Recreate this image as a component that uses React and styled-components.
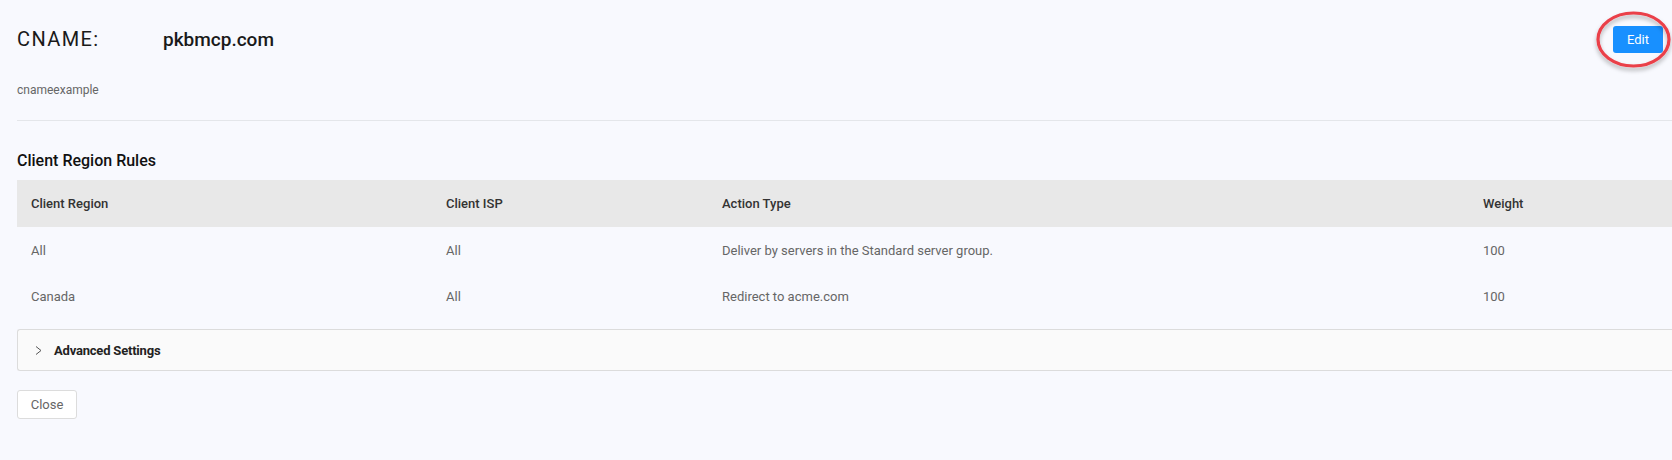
import React from "react";
import styled, { createGlobalStyle } from "styled-components";

const Global = createGlobalStyle`
  html, body { margin: 0; padding: 0; background: #f8f9fe; overflow: hidden; }
  body { font-family: Roboto, "Liberation Sans", Arial, sans-serif; }
  * { box-sizing: border-box; }
`;

const Page = styled.div`
  width: 1672px;
  height: 460px;
  background: #f8f9fe;
  padding: 26px 0 0 17px;
`;

const HeaderRow = styled.div`
  display: flex;
  align-items: center;
  height: 27px;
`;

const Label = styled.div`
  font-size: 20px;
  line-height: 27px;
  color: #1a1a1a;
  letter-spacing: 1.4px;
  width: 146px;
`;

const Domain = styled.div`
  font-size: 19px;
  line-height: 27px;
  color: #1a1a1a;
  font-weight: 500;
  flex: 1;
`;

const EditWrap = styled.div`
  position: relative;
  margin-right: 9px;
`;

const PrimaryButton = styled.button`
  width: 50px;
  height: 27px;
  border: none;
  border-radius: 3px;
  background: #1890ff;
  color: #fff;
  font-family: inherit;
  font-size: 13px;
  padding: 0;
`;

const Ring = styled.svg`
  position: absolute;
  left: -19px;
  top: -16px;
  pointer-events: none;
  overflow: visible;
`;

const Description = styled.div`
  margin-top: 28px;
  font-size: 12px;
  line-height: 18px;
  color: #666;
`;

const Divider = styled.div`
  margin-top: 21px;
  height: 1px;
  background: #e4e6ea;
`;

const SectionTitle = styled.h3`
  margin: 29px 0 8px;
  font-size: 16px;
  line-height: 22px;
  font-weight: 500;
  color: #111;
`;

const Table = styled.table`
  width: 100%;
  border-collapse: collapse;
  table-layout: fixed;
`;

const Th = styled.th`
  background: #e8e8e8;
  height: 47px;
  padding: 0 14px;
  text-align: left;
  font-size: 13px;
  font-weight: 500;
  color: #333;
  width: ${(p) => (p.$w ? `${p.$w}px` : "auto")};
`;

const Td = styled.td`
  height: 46px;
  padding: 0 14px;
  font-size: 13px;
  color: #666;
`;

const Collapse = styled.div`
  margin-top: 10px;
  height: 42px;
  border: 1px solid #dcdcdc;
  border-right: none;
  border-radius: 3px 0 0 3px;
  background: #fafafa;
  display: flex;
  align-items: center;
  padding-left: 17px;
  gap: 12px;
`;

const CollapseTitle = styled.span`
  font-size: 13px;
  font-weight: 700;
  letter-spacing: -0.2px;
  color: #222;
`;

const DefaultButton = styled.button`
  margin-top: 19px;
  width: 60px;
  height: 29px;
  border: 1px solid #dcdcdc;
  border-radius: 3px;
  background: #fff;
  color: #666;
  font-family: inherit;
  font-size: 13px;
  padding: 0;
`;

const rows = [
  ["All", "All", "Deliver by servers in the Standard server group.", "100"],
  ["Canada", "All", "Redirect to acme.com", "100"],
];

export default function App() {
  return (
    <>
      <Global />
      <Page>
        <HeaderRow>
          <Label>CNAME:</Label>
          <Domain>pkbmcp.com</Domain>
          <EditWrap>
            <PrimaryButton>Edit</PrimaryButton>
            <Ring width="88" height="60" viewBox="0 0 88 60">
              <defs>
                <filter id="sh" x="-20%" y="-20%" width="140%" height="160%">
                  <feDropShadow dx="0" dy="3" stdDeviation="2" floodColor="#000" floodOpacity="0.3" />
                </filter>
              </defs>
              <ellipse cx="39.5" cy="29.5" rx="35.5" ry="26.5" fill="none" stroke="#ea3f48" strokeWidth="3.2" filter="url(#sh)" />
            </Ring>
          </EditWrap>
        </HeaderRow>
        <Description>cnameexample</Description>
        <Divider />
        <SectionTitle>Client Region Rules</SectionTitle>
        <Table>
          <thead>
            <tr>
              <Th $w={415}>Client Region</Th>
              <Th $w={276}>Client ISP</Th>
              <Th $w={761}>Action Type</Th>
              <Th>Weight</Th>
            </tr>
          </thead>
          <tbody>
            {rows.map((r, i) => (
              <tr key={i}>
                {r.map((c, j) => (
                  <Td key={j}>{c}</Td>
                ))}
              </tr>
            ))}
          </tbody>
        </Table>
        <Collapse>
          <svg width="7" height="9" viewBox="0 0 7 9">
            <polyline points="1,0.5 6,4.5 1,8.5" fill="none" stroke="#555" strokeWidth="1" />
          </svg>
          <CollapseTitle>Advanced Settings</CollapseTitle>
        </Collapse>
        <DefaultButton>Close</DefaultButton>
      </Page>
    </>
  );
}
